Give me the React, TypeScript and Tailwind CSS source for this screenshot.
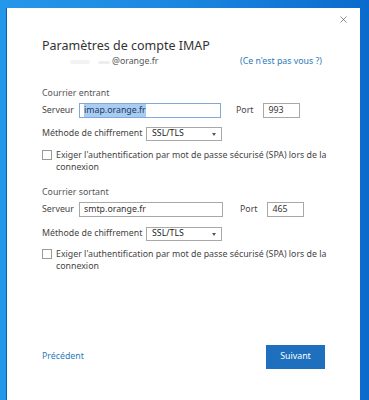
import { X } from 'lucide-react';

const font = { fontFamily: '"Noto Sans", "Open Sans", sans-serif' };

function Checkbox() {
  return (
    <div className="flex items-start text-[8.8px] leading-[12px] text-[#444]">
      <span className="mt-[1px] h-[10px] w-[10px] shrink-0 border border-[#9a9a9a] bg-white" />
      <span className="ml-[4px] w-[280px]">
        Exiger l'authentification par mot de passe sécurisé (SPA) lors de la connexion
      </span>
    </div>
  );
}

function ServerRow({
  host,
  port,
  selected,
  inputW,
  gap,
}: {
  host: string;
  port: string;
  selected?: boolean;
  inputW: string;
  gap: string;
}) {
  return (
    <div className="flex items-center whitespace-nowrap text-[8.8px] text-[#444]">
      <span className="w-[37px]">Serveur</span>
      <div
        className={`flex h-[15px] items-center border px-[4px] text-[#333] ${inputW} ${
          selected ? 'border-[#7fa9d8]' : 'border-[#a8a8a8]'
        }`}
      >
        {selected ? <span className="bg-[#a9cdf1] text-[#1c3a66]">{host}</span> : host}
      </div>
      <span className={gap}>Port</span>
      <div className="ml-[10px] flex h-[15px] w-[37px] items-center border border-[#a8a8a8] px-[4px] text-[#333]">
        {port}
      </div>
    </div>
  );
}

function MethodRow() {
  return (
    <div className="flex items-center whitespace-nowrap text-[8.8px] text-[#444]">
      <span className="w-[104px]">Méthode de chiffrement</span>
      <div className="flex h-[14px] w-[76px] items-center justify-between border border-[#a8a8a8] pl-[5px] pr-[5px] text-[#222]">
        <span>SSL/TLS</span>
        <span className="h-0 w-0 border-x-[2.5px] border-t-[3px] border-x-transparent border-t-[#555]" />
      </div>
    </div>
  );
}

export default function App() {
  return (
    <div
      className="h-[400px] w-[369px] overflow-hidden bg-gradient-to-r from-[#2597ea] via-[#1a86e0] to-[#0a6bcc] pl-[7px] pr-[9px] pt-[8px]"
      style={font}
    >
      <div className="relative flex h-[392px] flex-col bg-white pl-[35px] shadow-[-1px_0_0_#0c5fae]">
        <button className="absolute right-[11px] top-[6px] text-[#444]">
          <X size={11} strokeWidth={1.3} />
        </button>

        <div className="mt-[30px] h-[16px] text-[12.5px] leading-[16px] text-[#333]">
          Paramètres de compte IMAP
        </div>
        <div className="flex h-[16px] items-center justify-between pr-[38px] text-[8.8px]">
          <div className="flex items-center">
            <span className="ml-[28px] h-[4px] w-[20px] rounded-full bg-[#f3f3f3]" />
            <span className="ml-[8px] h-[3px] w-[12px] rounded-full bg-[#eeeeee]" />
            <span className="ml-[2px] text-[#555]">@orange.fr</span>
          </div>
          <span className="text-[#2b7bb9]">(Ce n'est pas vous ?)</span>
        </div>

        <div className="mt-[16px] h-[14px] text-[8.8px] leading-[14px] text-[#555]">Courrier entrant</div>
        <div className="mt-[3px]">
          <ServerRow host="imap.orange.fr" port="993" selected inputW="w-[142px]" gap="ml-[15px]" />
        </div>
        <div className="mt-[9px]">
          <MethodRow />
        </div>
        <div className="mt-[8px]">
          <Checkbox />
        </div>

        <div className="mt-[12px] h-[14px] text-[8.8px] leading-[14px] text-[#555]">Courrier sortant</div>
        <div className="mt-[3px]">
          <ServerRow host="smtp.orange.fr" port="465" inputW="w-[144px]" gap="ml-[17px]" />
        </div>
        <div className="mt-[10px]">
          <MethodRow />
        </div>
        <div className="mt-[7px]">
          <Checkbox />
        </div>

        <div className="mt-auto flex items-center justify-between pb-[31px] pr-[35px]">
          <span className="text-[8.8px] text-[#2b7bb9]">Précédent</span>
          <button className="h-[24px] w-[59px] bg-[#1e6fbe] text-[8.8px] text-white">Suivant</button>
        </div>
      </div>
    </div>
  );
}
